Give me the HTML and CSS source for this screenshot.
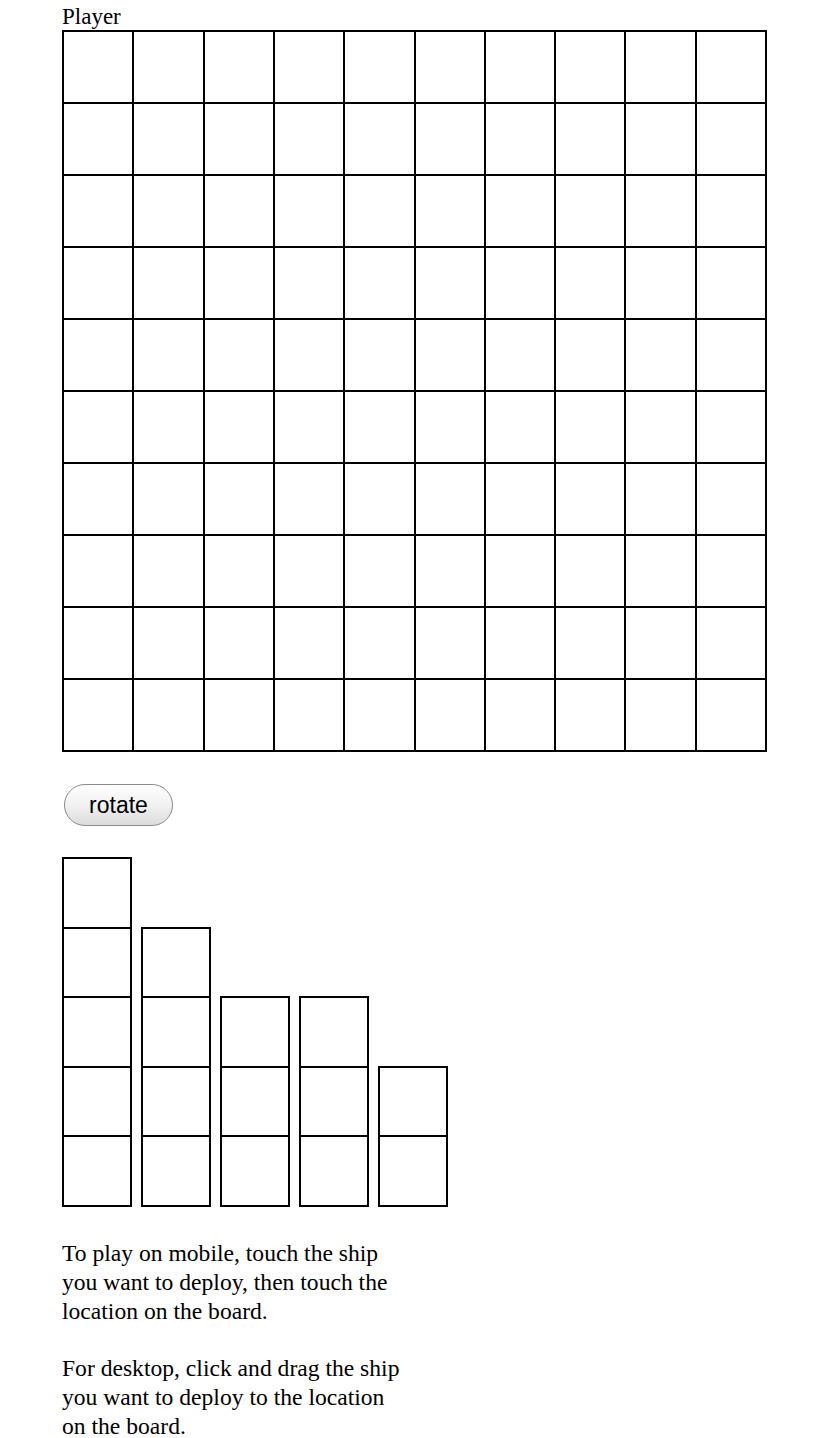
FILE: index.html
```html
<!DOCTYPE html>
<html>
<head>
<meta charset="utf-8">
<title>Player</title>
<link rel="stylesheet" href="styles.css">
</head>
<body>
<main class="page">
  <div class="label">Player</div>
  <div class="board" id="board"></div>
  <button class="rotate">rotate</button>
  <div class="fleet">
    <div class="ship"><div class="cell"></div><div class="cell"></div><div class="cell"></div><div class="cell"></div><div class="cell"></div></div>
    <div class="ship"><div class="cell"></div><div class="cell"></div><div class="cell"></div><div class="cell"></div></div>
    <div class="ship"><div class="cell"></div><div class="cell"></div><div class="cell"></div></div>
    <div class="ship"><div class="cell"></div><div class="cell"></div><div class="cell"></div></div>
    <div class="ship"><div class="cell"></div><div class="cell"></div></div>
  </div>
  <div class="help">
    <p>To play on mobile, touch the ship you want to deploy, then touch the location on the board.</p>
    <p>For desktop, click and drag the ship you want to deploy to the location on the board.</p>
  </div>
</main>
<script>
  var b = document.getElementById('board');
  for (var i = 0; i < 100; i++) {
    var d = document.createElement('div');
    d.className = 'square';
    b.appendChild(d);
  }
</script>
</body>
</html>
```

FILE: styles.css
```css
html, body {
  margin: 0;
  padding: 0;
  background: #fff;
}
.page {
  padding: 4px 0 0 62px;
  font-family: "Liberation Serif", "Times New Roman", serif;
  font-size: 23px;
  color: #000;
}
.label {
  line-height: 26px;
  height: 26px;
}
.board {
  width: 705px;
  height: 722px;
  box-sizing: border-box;
  border: 1px solid #000;
  display: grid;
  grid-template-columns: repeat(10, 1fr);
  grid-template-rows: repeat(10, 1fr);
}
.square {
  border: 1px solid #000;
}
.rotate {
  display: block;
  margin: 32px 0 0 2px;
  width: 109px;
  height: 42px;
  border-radius: 21px;
  border: 1px solid #8c8c8c;
  background: linear-gradient(#ffffff, #f1f1f1 50%, #dcdcdc);
  font-family: "Liberation Sans", Arial, sans-serif;
  font-size: 23px;
  color: #000;
  padding: 0;
}
.fleet {
  margin-top: 31px;
  display: flex;
  align-items: flex-end;
  gap: 9px;
}
.ship {
  width: 70px;
  box-sizing: border-box;
  border: 1px solid #000;
}
.cell {
  height: 69.6px;
  box-sizing: border-box;
  border: 1px solid #000;
}
.help {
  width: 342px;
  margin-top: 32px;
  font-size: 23.6px;
  line-height: 29px;
}
.help p {
  margin: 0 0 28px 0;
}
```
